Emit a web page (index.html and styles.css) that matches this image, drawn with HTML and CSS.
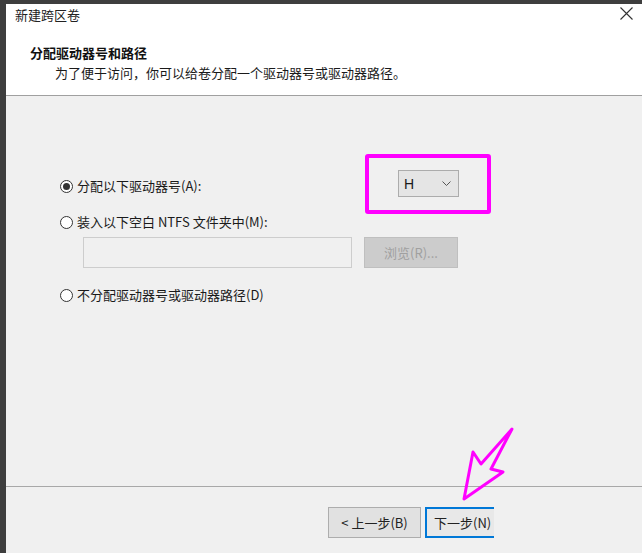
FILE: index.html
```html
<!DOCTYPE html>
<html lang="zh-CN">
<head>
<meta charset="utf-8">
<title>新建跨区卷</title>
<link rel="stylesheet" href="styles.css">
</head>
<body>
<div class="screen">
  <div class="topbar"></div>
  <div class="main">
    <div class="leftbar"></div>
    <div class="dialog">
      <header class="head">
        <div class="titlebar">
          <span class="title">新建跨区卷</span>
          <svg class="close" width="13" height="13" viewBox="0 0 13 13"><path d="M0.5 0.5 L12.5 12.5 M12.5 0.5 L0.5 12.5" stroke="#333" stroke-width="1.1" fill="none"/></svg>
        </div>
        <div class="heading">分配驱动器号和路径</div>
        <div class="sub">为了便于访问，你可以给卷分配一个驱动器号或驱动器路径。</div>
      </header>
      <section class="content">
        <div class="row1">
          <label class="opt"><span class="radio on"></span>分配以下驱动器号(A):</label>
          <div class="select"><span>H</span><svg width="9" height="5" viewBox="0 0 9 5"><path d="M0.5 0.5 L4.5 4.5 L8.5 0.5" stroke="#555" stroke-width="1" fill="none"/></svg></div>
        </div>
        <label class="opt row2"><span class="radio"></span>装入以下空白 NTFS 文件夹中(M):</label>
        <div class="pathrow">
          <div class="input"></div>
          <div class="btn disabled">浏览(R)...</div>
        </div>
        <label class="opt row3"><span class="radio"></span>不分配驱动器号或驱动器路径(D)</label>
      </section>
      <footer class="foot">
        <div class="btn back">&lt; 上一步(B)</div>
        <div class="clip"><div class="btn next">下一步(N)</div></div>
      </footer>
    </div>
  </div>
  <div class="hl-box"></div>
  <svg class="arrow" width="60" height="80" viewBox="455 424 60 80"><path d="M464 499 L473 452 L481 464 L512 429 L491 469 L503 472 Z" stroke="#ff00ff" stroke-width="3" fill="none" stroke-linejoin="round"/></svg>
</div>
</body>
</html>
```

FILE: styles.css
```css
* { box-sizing: border-box; }
html, body { margin: 0; padding: 0; }
body {
  width: 642px;
  height: 553px;
  overflow: hidden;
  background: #f0f0f0;
  font-family: "Noto Sans CJK SC", "Liberation Sans", sans-serif;
  font-size: 13px;
  color: #1a1a1a;
}
.screen { position: relative; width: 642px; height: 553px; }
.topbar { height: 4px; background: #3e3e3e; }
.main { display: flex; height: 549px; }
.leftbar { width: 6px; background: #3e3e3e; flex: none; }
.dialog { flex: 1; display: flex; flex-direction: column; background: #f0f0f0; }

.head {
  height: 92px;
  background: #fff;
  border-bottom: 1px solid #a0a0a0;
}
.titlebar {
  height: 22px;
  display: flex;
  justify-content: space-between;
  align-items: flex-start;
  padding: 0 9px 0 9px;
}
.title { line-height: 22px; color: #222; }
.close { margin-top: 3px; }
.heading {
  margin-top: 18px;
  padding-left: 24px;
  line-height: 18px;
  font-weight: bold;
  color: #111;
}
.sub {
  margin-top: 2px;
  padding-left: 49px;
  line-height: 18px;
  color: #1a1a1a;
}

.content {
  height: 390px;
  padding: 74px 0 0 54px;
  display: flex;
  flex-direction: column;
  align-items: flex-start;
}
.row1 { display: flex; height: 27px; align-items: flex-start; }
.opt {
  display: flex;
  align-items: center;
  gap: 4px;
  line-height: 20px;
  height: 20px;
  white-space: nowrap;
}
.row1 .opt { width: 338px; margin-top: 6px; }
.radio {
  width: 13px;
  height: 13px;
  border: 1px solid #333;
  border-radius: 50%;
  background: #fff;
  display: flex;
  align-items: center;
  justify-content: center;
  flex: none;
}
.radio.on::after {
  content: "";
  width: 7px;
  height: 7px;
  border-radius: 50%;
  background: #333;
}
.select {
  width: 61px;
  height: 27px;
  background: #e5e5e5;
  border: 1px solid #acacac;
  display: flex;
  align-items: center;
  justify-content: space-between;
  padding: 0 7px 0 5px;
  font-family: "Liberation Sans", sans-serif;
  font-size: 14px;
}
.row2 { margin-top: 15px; }
.pathrow {
  display: flex;
  gap: 12px;
  margin: 5px 0 0 23px;
}
.input {
  width: 269px;
  height: 31px;
  background: #f0f0f0;
  border: 1px solid #cdcdcd;
}
.btn {
  height: 31px;
  display: flex;
  align-items: center;
  justify-content: center;
  white-space: nowrap;
}
.btn.disabled {
  width: 94px;
  background: #cccccc;
  border: 1px solid #bfbfbf;
  color: #a0a0a0;
}
.row3 { margin-top: 17px; }

.foot {
  flex: 1;
  border-top: 1px solid #a8a8a8;
  padding: 20px 0 0 322px;
  display: flex;
  gap: 4px;
  align-items: flex-start;
}
.back {
  width: 93px;
  background: #e1e1e1;
  border: 1px solid #adadad;
  color: #222;
}
.clip { width: 69px; overflow: hidden; flex: none; }
.next {
  width: 93px;
  background: #e8e8e8;
  border: 2px solid #0078d7;
  color: #222;
  justify-content: flex-start;
  padding-left: 7px;
}

.hl-box {
  position: absolute;
  left: 365px;
  top: 154px;
  width: 126px;
  height: 60px;
  border: 4px solid #ff00ff;
  border-radius: 3px;
}
.arrow {
  position: absolute;
  left: 455px;
  top: 424px;
}
```
